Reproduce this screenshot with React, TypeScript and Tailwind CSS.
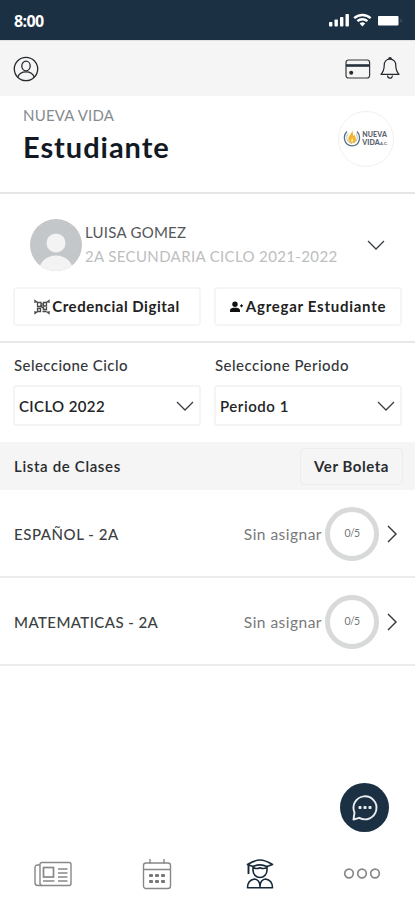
import React from "react";

type IconProps = { className?: string };

function Chevron({ className = "" }: IconProps) {
  return (
    <svg viewBox="0 0 18 10" className={className} fill="none" stroke="#3a3f44" strokeWidth="1.3">
      <path d="M1 1l8 8 8-8" />
    </svg>
  );
}

function StatusIcons() {
  return (
    <svg viewBox="0 0 76 16" className="h-4 w-[76px]" fill="#fff">
      <rect x="0" y="10" width="3.4" height="4.500" rx="0.8" />
      <rect x="5.500" y="7.5" width="3.400" height="7" rx="0.8" />
      <rect x="11" y="5" width="3.400" height="9.500" rx="0.8" />
      <rect x="16.500" y="2" width="3.400" height="12.500" rx="0.8" />
      <g fill="none" stroke="#fff" strokeWidth="2.4">
        <path d="M25.200 6.2a12 12 0 0 1 16.4 0" />
        <path d="M28.400 9.2a7.4 7.4 0 0 1 10 0" />
      </g>
      <path d="M30.600 11.6a4 4 0 0 1 5.600 0L33.400 14.600z" />
      <rect x="49" y="4" width="20.500" height="9.500" rx="1" />
      <path d="M71.600 7v3.4c1.4-.5 1.4-2.9 0-3.4z" fill="#5e6f7c" />
    </svg>
  );
}

function UserCircle() {
  return (
    <svg viewBox="0 0 26 26" className="size-[26px]" fill="none" stroke="#25292d" strokeWidth="1.3">
      <circle cx="13" cy="13" r="11.7" />
      <ellipse cx="13" cy="10" rx="4.2" ry="4.8" />
      <path d="M4.8 21c1.2-3.600 4.600-5.200 8.200-5.200s7 1.600 8.200 5.200" />
    </svg>
  );
}

function CardIcon() {
  return (
    <svg viewBox="0 0 26 20" className="h-5 w-[26px]" fill="none" stroke="#34383c" strokeWidth="1.200">
      <rect x="1" y="1" width="23.600" height="18" rx="2.500" />
      <path d="M1 6.500h23.600" stroke="#25303a" strokeWidth="2.600" />
      <circle cx="6.200" cy="13.800" r="2" fill="#25292d" stroke="none" />
    </svg>
  );
}

function BellIcon() {
  return (
    <svg viewBox="0 0 20 23" className="h-[23px] w-5" fill="none" stroke="#25292d" strokeWidth="1.200" strokeLinejoin="round">
      <path d="M10 2.200c-3.700 0-5.800 2.600-5.800 6.200 0 4.500-1 6.400-3.200 8.900h18c-2.200-2.500-3.200-4.400-3.200-8.900 0-3.600-2.100-6.200-5.800-6.200z" />
      <path d="M9 2a1 1 0 0 1 2 0" strokeWidth="1.800" />
      <path d="M7.600 18.500c0 3.600 4.800 3.600 4.800 0" />
    </svg>
  );
}

function Logo() {
  return (
    <div className="flex size-14 items-center justify-center gap-px rounded-full border border-[#f0f0f0] bg-white pr-px pb-[3px]">
      <svg viewBox="0 0 18 18" className="size-[18px] shrink-0" fill="none">
        <path d="M4 2.500C-.5 6.500.8 16.800 9 16.800S18.300 7 14 2.500" stroke="#55707f" strokeWidth="1.300" />
        <path d="M5 4.500c-2.500 4-.8 9.500 4 10M13.200 4.500c2 3.600.8 7.600-2 9.400" stroke="#b9c4ca" strokeWidth="1" />
        <path d="M9.200 1c.6 3-3.800 5-3.800 9 0 2.600 1.600 4 3.600 4.200 2.200.100 4-1.500 4-4 0-2-1.200-3.200-1.600-5-.6.800-.7 1.600-.6 2.400C9.600 6.200 10.200 3 9.200 1z" fill="#f3b52c" />
        <path d="M9.200 9c-1.800 2-1.400 4 0 4.400 1.400-.8 1.400-2.600 0-4.400z" fill="#fbe3a0" />
      </svg>
      <div className="flex flex-col text-[7px] font-black tracking-[0.150px] text-[#59636b]">
        <span className="h-2 leading-[8px]">NUEVA</span>
        <span className="flex h-2 items-baseline leading-[8px]">
          VIDA<span className="text-[4px] leading-[5px]">A.C.</span>
        </span>
      </div>
    </div>
  );
}

function Avatar() {
  return (
    <svg viewBox="0 0 52 52" className="size-[52px]">
      <defs>
        <clipPath id="avatar-clip">
          <circle cx="26" cy="26" r="26" />
        </clipPath>
      </defs>
      <g clipPath="url(#avatar-clip)">
        <rect width="52" height="52" fill="#c4c7ca" />
        <circle cx="26" cy="24" r="9.500" fill="#f3f3f3" />
        <ellipse cx="26" cy="52" rx="17" ry="15.500" fill="#f3f3f3" />
      </g>
    </svg>
  );
}

function QrIcon() {
  return (
    <svg viewBox="0 0 16 16" className="size-4" fill="none" stroke="#4a4a4a" strokeWidth="1.300">
      <path d="M1 4V1.500L3.500 3.500M15 4V1.500L12.500 3.500M15 12v2.500L12.500 12.500M1 12v2.500L3.500 12.500" />
      <path d="M3.500 3.500h3.500v4H3.500zM9.500 3.500h3v3.500h-3zM3.500 9.500h3v3h-3z" />
      <path d="M6.500 6.500l3 3M9.500 8v2.500h3V8M8.500 12.500h4M8 4v5" />
    </svg>
  );
}

function AddUserIcon() {
  return (
    <svg viewBox="0 0 14 12" className="h-3 w-[14px]" fill="#111">
      <circle cx="5" cy="3.200" r="2.700" />
      <path d="M0 11V9.500C0 7.300 2.500 6.800 5 6.800s5 .5 5 2.700V11z" />
      <path d="M10 4.200h3v1.200h-3z" />
      <path d="M11 3.300h1v3h-1z" />
    </svg>
  );
}

function SelectField({ label, value, spacing, labelSpacing }: { label: string; value: string; spacing: string; labelSpacing: string }) {
  return (
    <div className="flex flex-col">
      <span className={`pl-px text-[15px] leading-5 font-medium text-[#34373a] ${labelSpacing}`}>{label}</span>
      <div className="mt-[10px] flex h-[41px] items-center justify-between rounded-[3px] border-2 border-[#f4f4f4] pr-[5px] pl-1">
        <span className={`pt-[2px] text-[15px] font-semibold text-[#232528] ${spacing}`}>{value}</span>
        <Chevron className="h-[10px] w-[18px]" />
      </div>
    </div>
  );
}

function ClassRow({ name, spacing }: { name: string; spacing: string }) {
  return (
    <div className="flex h-[88px] items-center border-b-2 border-[#ececec] pt-px pr-[18px] pl-[14px]">
      <span className={`flex-1 pt-px text-[15px] font-medium text-[#3c3f42] ${spacing}`}>{name}</span>
      <span className="mr-[3px] pt-[2px] text-[15.500px] tracking-[0.480px] text-[#77797b]">Sin asignar</span>
      <div className="flex size-[54px] items-center justify-center rounded-full border-[5px] border-[#d7dad9] text-[10.500px] tracking-[-0.600px] text-[#777]">
        0/5
      </div>
      <svg viewBox="0 0 10 18" className="ml-2 h-[18px] w-[10px]" fill="none" stroke="#333" strokeWidth="1.400">
        <path d="M1 1l8 8-8 8" />
      </svg>
    </div>
  );
}

function NewsIcon() {
  return (
    <svg viewBox="0 0 38 26" className="h-[26px] w-[38px]" fill="none" stroke="#888" strokeWidth="1.400">
      <rect x="6" y="1.500" width="31" height="23" rx="2" />
      <path d="M6 4H3.500Q1 4 1 6.500V22Q1 24.500 4 24.500h4" />
      <rect x="9.500" y="6.500" width="10" height="9.500" strokeWidth="1.700" />
      <path d="M24 8h9.500M24 12h9.500M24 16h9.500M24 20h9.500M9 20h11.500" />
    </svg>
  );
}

function CalendarIcon() {
  return (
    <svg viewBox="0 0 30 32" className="h-8 w-[30px]" fill="none" stroke="#888" strokeWidth="1.400">
      <rect x="1.500" y="5" width="27" height="25.500" rx="2.500" />
      <path d="M1.500 11.500h27M8 1v4.500M22 1v4.500" />
      <g fill="#777" stroke="none">
        <rect x="7" y="16" width="4" height="3" rx="1" />
        <rect x="13" y="16" width="4" height="3" rx="1" />
        <rect x="19" y="16" width="4" height="3" rx="1" />
        <rect x="7" y="22" width="4" height="3" rx="1" />
        <rect x="13" y="22" width="4" height="3" rx="1" />
        <rect x="19" y="22" width="4" height="3" rx="1" />
      </g>
    </svg>
  );
}

function GraduateIcon() {
  return (
    <svg viewBox="0 0 28 30" className="h-[30px] w-7" fill="none" stroke="#172838" strokeWidth="1.600" strokeLinejoin="round">
      <path d="M1.500 5.500Q9 1 14 1t12.500 4.500L21 7.500Q14 4.300 7 7.500z" />
      <path d="M2.500 6v9" strokeWidth="1.900" />
      <path d="M7 7.500v3.700c0 4 3 7.300 7 7.300s7-3.300 7-7.300V7.500M7 8.500q3.500 2 7 .2 3.500 1.800 7-.2" />
      <path d="M8.500 20c-4.500.8-7 3.500-7 8.800h25c0-5.300-2.500-8-7-8.800Q15 20.500 14 26 13 20.500 8.500 20z" />
      <path d="M14 25v4" />
    </svg>
  );
}

export default function App() {
  return (
    <div className="relative flex h-[900px] w-[415px] flex-col overflow-hidden bg-white font-['Lato','Open_Sans',sans-serif]">
      <div className="flex h-10 shrink-0 items-center justify-between bg-[#1b3042] pr-[10px] pl-[14px]">
        <span className="pt-px font-['Open_Sans',sans-serif] text-[16px] font-bold tracking-[-0.600px] text-white">8:00</span>
        <StatusIcons />
      </div>

      <div className="flex h-14 shrink-0 items-center border-t border-[#dfe1e3] bg-[#f5f5f5] pr-[15px] pl-[13px]">
        <UserCircle />
        <div className="flex-1" />
        <CardIcon />
        <div className="w-[9px]" />
        <BellIcon />
      </div>

      <div className="flex h-[98px] shrink-0 items-start justify-between border-b-2 border-[#e5e5e5] pr-[21px] pl-[23px]">
        <div className="flex flex-col">
          <span className="mt-[9px] text-[15px] leading-5 tracking-[0.200px] text-[#868b90]">NUEVA VIDA</span>
          <h1 className="mt-1 text-[29px] leading-9 font-bold tracking-[0.950px] text-[#111a24]">Estudiante</h1>
        </div>
        <div className="mt-[15px]">
          <Logo />
        </div>
      </div>

      <div className="flex h-[149px] shrink-0 flex-col border-b-2 border-[#e8e8e8] px-[13px]">
        <div className="mt-[25px] flex h-[52px] items-center pr-[17px] pl-[17px]">
          <Avatar />
          <div className="-mt-[3px] ml-[3px] flex flex-1 flex-col gap-1">
            <span className="text-[15px] leading-5 tracking-[0.250px] text-[#55585b]">LUISA GOMEZ</span>
            <span className="text-[15px] leading-5 tracking-[0.360px] whitespace-nowrap text-[#bcbec0]">2A SECUNDARIA CICLO 2021-2022</span>
          </div>
          <Chevron className="h-[10px] w-[18px]" />
        </div>
        <div className="mt-[16px] grid grid-cols-2 gap-[13px]">
          <button className="flex h-[39px] items-center justify-center gap-[2px] rounded-[4px] border-2 border-[#f5f5f5] text-[15px] font-bold whitespace-nowrap text-[#222]">
            <QrIcon />
            <span className="tracking-[0.520px]">Credencial Digital</span>
          </button>
          <button className="flex h-[39px] items-center justify-center gap-[2px] rounded-[4px] border-2 border-[#f5f5f5] text-[15px] font-bold whitespace-nowrap text-[#222]">
            <AddUserIcon />
            <span className="tracking-[0.730px]">Agregar Estudiante</span>
          </button>
        </div>
      </div>

      <div className="grid h-[99px] shrink-0 grid-cols-2 gap-[13px] px-[13px] pt-[12px]">
        <SelectField label="Seleccione Ciclo" value="CICLO 2022" labelSpacing="tracking-[0.430px]" spacing="tracking-[0.380px]" />
        <SelectField label="Seleccione Periodo" value="Periodo 1" labelSpacing="tracking-[0.480px]" spacing="tracking-[0.550px]" />
      </div>

      <div className="flex h-12 shrink-0 items-center justify-between bg-[#f5f5f5] pr-[12px] pl-[14px]">
        <span className="text-[15px] font-semibold tracking-[0.650px] text-[#292b2e]">Lista de Clases</span>
        <button className="h-[37px] w-[103px] rounded-[4px] border border-[#ededed] text-[15px] font-bold tracking-[0.550px] text-[#292b2e]">
          Ver Boleta
        </button>
      </div>

      <ClassRow name="ESPAÑOL - 2A" spacing="tracking-[0.550px]" />
      <ClassRow name="MATEMATICAS - 2A" spacing="tracking-[0.420px]" />

      <div className="flex-1" />

      <nav className="flex h-[52px] shrink-0 items-center">
        <div className="flex w-[106px] justify-center">
          <NewsIcon />
        </div>
        <div className="flex w-[101px] justify-center">
          <CalendarIcon />
        </div>
        <div className="flex w-[105px] justify-center">
          <GraduateIcon />
        </div>
        <div className="flex flex-1 justify-center pr-[3px]">
          <svg viewBox="0 0 38 12" className="h-3 w-[38px]" fill="none" stroke="#888" strokeWidth="1.700">
            <circle cx="6" cy="5.500" r="4.300" />
            <circle cx="19" cy="5.500" r="4.300" />
            <circle cx="32" cy="5.500" r="4.300" />
          </svg>
        </div>
      </nav>

      <button className="absolute top-[783px] left-[340px] flex size-[49px] items-center justify-center rounded-full bg-[#1b3042]">
        <svg viewBox="0 0 28 28" className="size-7" fill="none" stroke="#e8edf0" strokeWidth="1.900" strokeLinejoin="round">
          <path d="M2.500 25.500l1-7A11.500 11.500 0 1 1 8.300 23.800z" />
          <g fill="#e8edf0" stroke="none">
            <rect x="7.500" y="12" width="3" height="3" rx="0.800" />
            <rect x="12.500" y="12" width="3" height="3" rx="0.800" />
            <rect x="17.500" y="12" width="3" height="3" rx="0.800" />
          </g>
        </svg>
      </button>
    </div>
  );
}
